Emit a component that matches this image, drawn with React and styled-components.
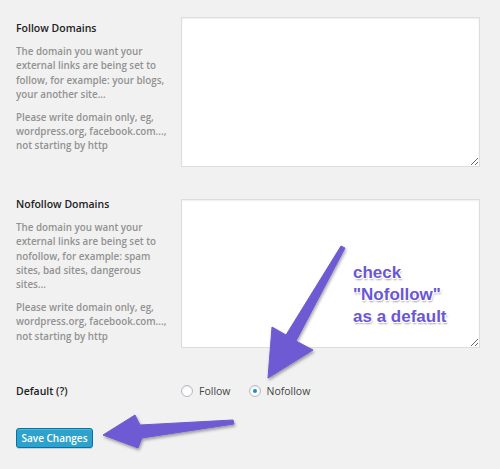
import React from "react";
import styled, { createGlobalStyle } from "styled-components";

const Global = createGlobalStyle`
  html, body { margin: 0; padding: 0; background: #f1f1f1; }
  body { font-family: "Open Sans", "Noto Sans", sans-serif; color: #222; }
  * { box-sizing: border-box; }
`;

const Page = styled.div`
  position: relative;
  width: 500px;
  height: 469px;
  padding: 17px 20px 0 16px;
  overflow: hidden;
`;

const Row = styled.div`
  display: grid;
  grid-template-columns: 165px 299px;
  align-items: start;
  margin-top: ${(p) => p.$gap || 0}px;
`;

const LabelCol = styled.div`
  padding-top: ${(p) => p.$offset || 0}px;
`;

const Label = styled.div`
  font-size: 10.5px;
  font-weight: 600;
  line-height: 14px;
  color: #222;
`;

const Desc = styled.p`
  margin: 10px 0 0;
  max-width: 156px;
  font-size: 9.8px;
  font-weight: 600;
  line-height: 14.3px;
  color: #929292;
  & + & { margin-top: 8.7px; }
`;

const Area = styled.textarea`
  display: block;
  width: 299px;
  height: ${(p) => p.$h}px;
  margin-top: ${(p) => p.$offset || 0}px;
  border: 1px solid #ddd;
  background: #fff;
  box-shadow: inset 0 1px 2px rgba(0, 0, 0, 0.07);
  outline: none;
  resize: vertical;
  font-family: inherit;
`;

const Radios = styled.div`
  display: flex;
  align-items: center;
  gap: 18px;
`;

const RadioLabel = styled.label`
  display: flex;
  align-items: center;
  gap: 6px;
  font-size: 10.5px;
  line-height: 14px;
  color: #444;
`;

const Radio = styled.input.attrs({ type: "radio" })`
  appearance: none;
  margin: 0;
  width: 12px;
  height: 12px;
  border-radius: 50%;
  border: 1px solid #b4b9be;
  background: #fff;
  box-shadow: inset 0 1px 2px rgba(0, 0, 0, 0.1);
  display: grid;
  place-items: center;
  &:checked::before {
    content: "";
    width: 4px;
    height: 4px;
    border-radius: 50%;
    background: #1e8cbe;
  }
`;

const Button = styled.button`
  display: block;
  margin-top: 30px;
  width: 77px;
  height: 20px;
  padding: 0;
  border: 1px solid #0074a2;
  border-radius: 3px;
  background: #2ea2cc;
  box-shadow: inset 0 1px 0 rgba(120, 200, 230, 0.5), 0 1px 0 rgba(0, 0, 0, 0.15);
  color: #fff;
  font-family: inherit;
  font-size: 10px;
  font-weight: 600;
`;

const Overlay = styled.svg`
  position: absolute;
  left: 0;
  top: 0;
  pointer-events: none;
`;

const Note = styled.div`
  position: absolute;
  left: 353px;
  top: 262px;
  font-family: "Liberation Sans", Arial, sans-serif;
  font-weight: 700;
  font-size: 17px;
  line-height: 22px;
  color: #6a57d5;
  text-shadow: 1px 0 0 #fff, -1px 0 0 #fff, 0 1px 0 #fff, 0 -1px 0 #fff,
    1px 1px 0 #fff, -1px -1px 0 #fff, 1px -1px 0 #fff, -1px 1px 0 #fff,
    1px 2px 2px rgba(0, 0, 0, 0.4);
`;

export default function App() {
  return (
    <>
      <Global />
      <Page>
        <Row>
          <LabelCol $offset={4}>
            <Label>Follow Domains</Label>
            <Desc>
              The domain you want your external links are being set to follow,
              for example: your blogs, your another site...
            </Desc>
            <Desc>
              Please write domain only, eg, wordpress.org, facebook.com...,
              not starting by http
            </Desc>
          </LabelCol>
          <Area $h={150} />
        </Row>
        <Row $gap={30}>
          <LabelCol>
            <Label>Nofollow Domains</Label>
            <Desc>
              The domain you want your external links are being set to
              nofollow, for example: spam sites, bad sites, dangerous sites...
            </Desc>
            <Desc>
              Please write domain only, eg, wordpress.org, facebook.com...,
              not starting by http
            </Desc>
          </LabelCol>
          <Area $h={149} $offset={2} />
        </Row>
        <Row $gap={36}>
          <LabelCol>
            <Label>Default (?)</Label>
          </LabelCol>
          <Radios>
            <RadioLabel>
              <Radio name="def" />
              Follow
            </RadioLabel>
            <RadioLabel>
              <Radio name="def" defaultChecked />
              Nofollow
            </RadioLabel>
          </Radios>
        </Row>
        <Button>Save Changes</Button>

        <Overlay width="500" height="469" viewBox="0 0 500 469">
          <defs>
            <filter id="sh" x="-20%" y="-20%" width="140%" height="140%">
              <feDropShadow dx="1" dy="2" stdDeviation="1.5" floodColor="#000" floodOpacity="0.35" />
            </filter>
          </defs>
          <g fill="#6e5ad2" stroke="#6e5ad2" strokeWidth="1" strokeLinejoin="round" filter="url(#sh)">
            <polygon points="341,246 345,248 296,341 313,350 268,378 272,327 286,335" />
            <polygon points="233,420 234,424 142,438 138,448 103,435 135,415 140,425" />
          </g>
        </Overlay>
        <Note>
          check
          <br />
          "Nofollow"
          <br />
          as a default
        </Note>
      </Page>
    </>
  );
}
